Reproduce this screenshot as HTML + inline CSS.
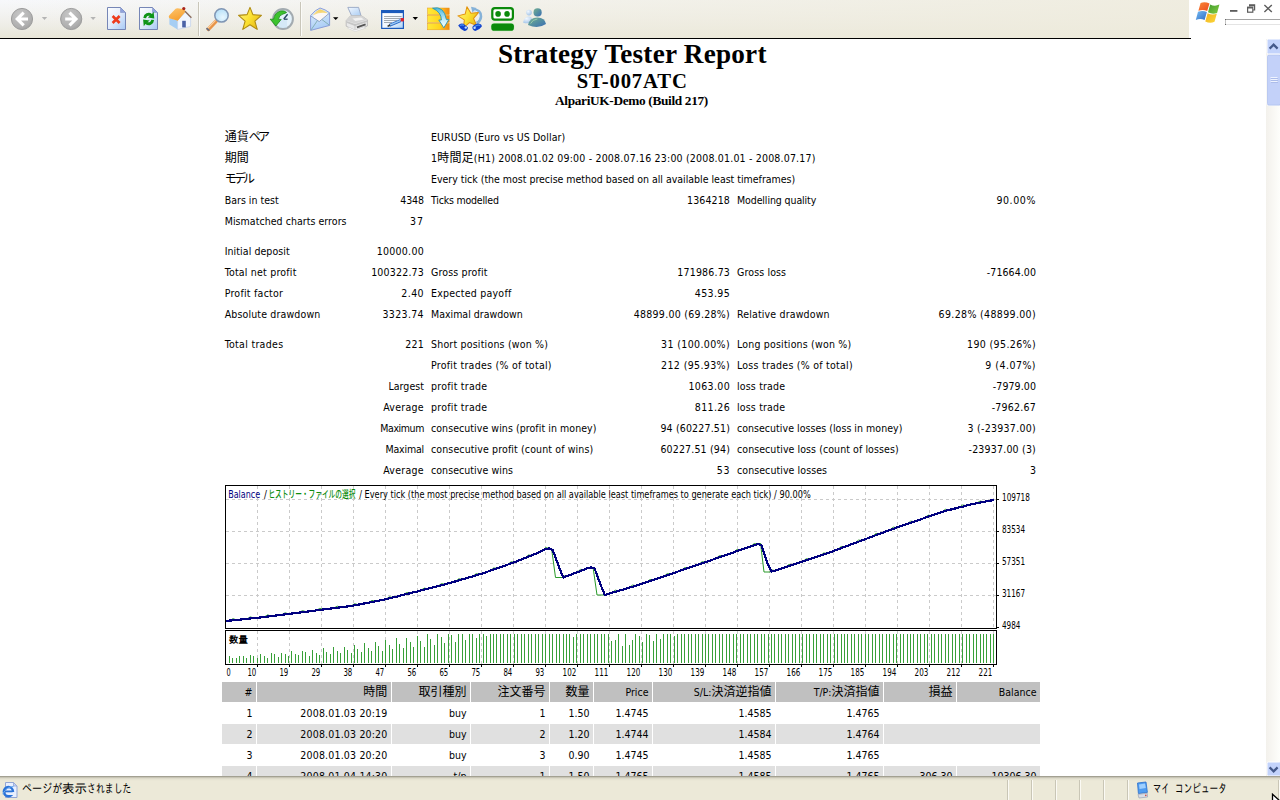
<!DOCTYPE html>
<html lang="ja">
<head>
<meta charset="utf-8">
<title>Strategy Tester: ST-007ATC</title>
<style>
html,body{margin:0;padding:0;}
body{width:1280px;height:800px;overflow:hidden;background:#fff;position:relative;
  font-family:"DejaVu Sans Condensed","Liberation Sans","Noto Sans CJK JP",sans-serif;font-size:10.5px;color:#000;}
.abs{position:absolute;}
#toolbar{position:absolute;left:0;top:0;width:1189px;height:38px;
  background:linear-gradient(to right,rgba(238,235,220,0) 0%,rgba(238,235,220,0.5) 45%,rgba(238,235,220,0.88) 100%),linear-gradient(to bottom,#f7f8fb 0px,#f3f3f1 14px,#eeede6 26px,#e8e5d7 38px);}
#tbline{position:absolute;left:0;top:38px;width:1191px;height:1px;background:#000;}
#page{position:absolute;left:0;top:39px;width:1266px;height:737px;overflow:hidden;background:#fff;}
h1,h2,h3{margin:0;font-family:"Liberation Serif",serif;font-weight:bold;position:absolute;left:0;width:1263px;text-align:center;white-space:nowrap;}
h1{font-size:27.2px;top:38px;left:0.8px;line-height:32px;letter-spacing:0.23px;}
h2{font-size:20.7px;top:69px;left:0.7px;line-height:24px;letter-spacing:0.85px;}
h3{font-size:13.3px;top:92.8px;line-height:16px;letter-spacing:-0.33px;}
.row{position:absolute;left:0;width:1266px;height:21px;line-height:21px;white-space:nowrap;}
.row span{position:absolute;top:0;}
.c1{left:224.7px;} .c2{right:842px;} .c3{left:431px;} .c4{right:536px;} .c5{left:737px;} .c6{right:230px;}
.jp{font-family:"Liberation Sans","Noto Sans CJK JP",sans-serif;font-size:12px;position:relative;top:0;}
.row span.jp{position:relative;top:0.4px;}
.row span.jp span{position:static;}
.kn{letter-spacing:-2.8px;}
#trades{position:absolute;left:222px;top:682px;width:819px;}
.tr{position:absolute;left:0;height:20px;width:819px;}
.tr div{position:absolute;top:0;height:20px;line-height:20px;text-align:right;box-sizing:border-box;padding-right:3.5px;padding-top:0;white-space:nowrap;overflow:hidden;}
.hd div{background:#c0c0c0;}
.alt div{background:#e0e0e0;}
.k1{left:0;width:34px}.k2{left:35px;width:134px;letter-spacing:0.18px}.k3{left:170px;width:78px}.k4{left:249px;width:78px}.k5{left:328px;width:43px}
.k6{left:372px;width:58px}.k7{left:431px;width:122px}.k8{left:554px;width:107px}.k9{left:662px;width:72px}.k10{left:735px;width:83px}
#status{position:absolute;left:0;top:776px;width:1280px;height:24px;background:#ece9d8;border-top:1px solid #aca899;box-sizing:border-box;}
#status .sp{position:absolute;top:3px;width:1px;height:20px;background:#c9c6b6;border-right:1px solid #fbfaf4;}
#status .st{position:absolute;top:5.4px;height:14px;line-height:14px;font-family:'Liberation Sans','IPAGothic','Noto Sans CJK JP',sans-serif;font-size:12.6px;white-space:nowrap;}
#status .sx{display:inline-block;transform-origin:0 50%;}
#vscroll{position:absolute;left:1266px;top:39px;width:14px;height:737px;background:linear-gradient(to right,#f3f1ec,#fefefb);}
</style>
</head>
<body>
<div id="toolbar">
<svg width="1189" height="38" viewBox="0 0 1189 38" style="position:absolute;left:0;top:0">
<defs>
<radialGradient id="gbtn" cx="0.4" cy="0.3" r="0.8"><stop offset="0" stop-color="#c6c6c6"/><stop offset="0.7" stop-color="#b0b0b0"/><stop offset="1" stop-color="#9c9c9c"/></radialGradient>
<linearGradient id="gpage" x1="0" y1="0" x2="1" y2="1"><stop offset="0" stop-color="#fdfeff"/><stop offset="0.45" stop-color="#e6eefb"/><stop offset="1" stop-color="#a6c9f5"/></linearGradient>
<linearGradient id="gstar" x1="0" y1="0.2" x2="1" y2="0.8"><stop offset="0" stop-color="#fff27a"/><stop offset="0.5" stop-color="#fbe030"/><stop offset="1" stop-color="#e4b414"/></linearGradient>
<radialGradient id="gglass" cx="0.6" cy="0.65" r="0.7"><stop offset="0" stop-color="#e8f7ff"/><stop offset="1" stop-color="#b2def8"/></radialGradient>
<linearGradient id="gyel" x1="0" y1="0" x2="1" y2="0"><stop offset="0" stop-color="#ffe93a"/><stop offset="0.55" stop-color="#ffd51e"/><stop offset="0.8" stop-color="#f9a21a"/><stop offset="1" stop-color="#f08a10"/></linearGradient>
<linearGradient id="gblu" x1="0" y1="0" x2="0" y2="1"><stop offset="0" stop-color="#48b8e0"/><stop offset="0.6" stop-color="#c4ecf8"/><stop offset="1" stop-color="#ffffff"/></linearGradient>
</defs>
<!-- back -->
<g>
<circle cx="22" cy="19" r="10.6" fill="url(#gbtn)" stroke="#9e9e9e" stroke-width="1"/>
<path d="M15 19 L22.6 11.6 L24.8 13.8 L21 17.5 L28 17.5 L28 20.6 L21 20.6 L24.8 24.3 L22.6 26.5 Z" fill="#fff"/>
<path d="M41.8 17 L47.2 17 L44.5 20 Z" fill="#b4b4b4"/>
</g>
<!-- forward -->
<g>
<circle cx="71.2" cy="19" r="10.6" fill="url(#gbtn)" stroke="#9e9e9e" stroke-width="1"/>
<path d="M78.2 19 L70.6 11.6 L68.4 13.8 L72.2 17.5 L65.2 17.5 L65.2 20.6 L72.2 20.6 L68.4 24.3 L70.6 26.5 Z" fill="#fff"/>
<path d="M90.4 17 L95.8 17 L93.1 20 Z" fill="#b4b4b4"/>
</g>
<!-- stop -->
<g>
<path d="M107.5 7.5 H120.5 L125.5 12.5 V29.5 H107.5 Z" fill="url(#gpage)" stroke="#7686b6" stroke-width="1"/>
<path d="M120.5 7.5 V12.5 H125.5 Z" fill="#8fa2dc" stroke="#8696c6" stroke-width="0.6" stroke-linejoin="round"/>
<path d="M112.6 16 L119.6 23 M119.6 16 L112.6 23" stroke="#ee3b1c" stroke-width="2.6" stroke-linecap="butt"/>
</g>
<!-- refresh -->
<g>
<path d="M139.5 7.5 H152.5 L157.5 12.5 V29.5 H139.5 Z" fill="url(#gpage)" stroke="#7686b6" stroke-width="1"/>
<path d="M152.5 7.5 V12.5 H157.5 Z" fill="#8fa2dc" stroke="#8696c6" stroke-width="0.6" stroke-linejoin="round"/>
<g transform="translate(148.7 19) scale(1.17) translate(-148.8 -19.5)"><path d="M144.2 18.6 A4.6 4.6 0 0 1 151.6 15.2 L153 13.2 L153.6 19 L148 18.2 L149.8 16.8 A2.4 2.4 0 0 0 146.6 18.8 Z" fill="#0f9418"/>
<path d="M153.4 20.4 A4.6 4.6 0 0 1 146 23.8 L144.6 25.8 L144 20 L149.6 20.8 L147.8 22.2 A2.4 2.4 0 0 0 151 20.2 Z" fill="#0f9418"/></g>
</g>
<!-- home -->
<g>
<defs><linearGradient id="groof" x1="0" y1="0" x2="0.4" y2="1"><stop offset="0" stop-color="#fdc56e"/><stop offset="1" stop-color="#f7a030"/></linearGradient></defs>
<path d="M169.4 18 L177.6 20.6 L177.6 29.4 L169.4 24.6 Z" fill="#a6cef4"/>
<path d="M177.6 20.4 L185.4 12.4 L190.6 17.8 L190.6 26.4 L177.6 29.4 Z" fill="#f1f6fd" stroke="#b9cbe8" stroke-width="0.6"/>
<path d="M168.8 17 Q168.6 16 169.6 15 L175.6 8.8 Q176.4 8.2 177.4 8.2 L184.6 9.2 L185.6 11.6 L177.8 20.8 L169.4 18.2 Z" fill="url(#groof)"/>
<path d="M185 11.2 L191.4 17.8" stroke="#8a6a5a" stroke-width="1.3" fill="none"/>
<rect x="182.2" y="20.8" width="3.6" height="6.6" fill="#4a62a6"/>
<circle cx="183.8" cy="8.6" r="1.6" fill="#a8241a"/>
</g>
<!-- sep -->
<rect x="198" y="2" width="1" height="34" fill="#c9c6ba"/><rect x="199" y="2" width="1" height="34" fill="#fbfbf8"/>
<!-- search -->
<g>
<defs><linearGradient id="ghandle" x1="0" y1="0" x2="1" y2="1"><stop offset="0" stop-color="#fbd3a2"/><stop offset="0.5" stop-color="#f0a050"/><stop offset="1" stop-color="#d87828"/></linearGradient></defs>
<path d="M216 21.2 L208.4 29.2" stroke="#e89448" stroke-width="3.8" stroke-linecap="round"/>
<path d="M215.2 20.6 L207.8 28.4" stroke="#fbd0a0" stroke-width="1.2" stroke-linecap="round"/>
<path d="M208.8 30.2 L207 28.6" stroke="#6a7080" stroke-width="1.8" stroke-linecap="round"/>
<circle cx="221.5" cy="15.4" r="6.7" fill="url(#gglass)" stroke="#8096b4" stroke-width="1.5"/>
</g>
<!-- star -->
<path d="M250 7.4 L252.9 14.6 L261.4 15.4 L254.9 21.2 L257.2 29.4 L250 24.8 L242.8 29.4 L245.1 21.2 L238.6 15.4 L247.1 14.6 Z" fill="url(#gstar)" stroke="#b08c12" stroke-width="1.1" stroke-linejoin="round"/>
<!-- history -->
<g>
<circle cx="283" cy="19" r="9.9" fill="#e4f2fb" stroke="#a3abb0" stroke-width="2"/>
<path d="M283 20 L283 28" stroke="#c7e2f5" stroke-width="8" opacity="0.5"/>
<path d="M283.8 19 L287.6 14.2" stroke="#2c4a66" stroke-width="1.4"/>
<path d="M283.8 19.2 L287.6 19.2" stroke="#2c4a66" stroke-width="1.3"/>
<path d="M286.6 12.4 Q284.4 10.2 280.6 11 Q274.4 12.8 273.6 19.2 L270.2 19.2 L275.9 26 L281.2 19.4 L278.4 19.4 Q279 15 283 14 Q285 13.6 286.6 12.4 Z" fill="#3cc22e" stroke="#1d8a1c" stroke-width="0.8" stroke-linejoin="round"/>
</g>
<!-- sep -->
<rect x="300" y="2" width="1" height="34" fill="#c9c6ba"/><rect x="301" y="2" width="1" height="34" fill="#fbfbf8"/>
<!-- mail -->
<g>
<defs><linearGradient id="gmail" x1="0" y1="0" x2="0.3" y2="1"><stop offset="0" stop-color="#e6f2fd"/><stop offset="1" stop-color="#a9cdf6"/></linearGradient>
<linearGradient id="gflap" x1="0" y1="0" x2="0" y2="1"><stop offset="0" stop-color="#f3cf5e"/><stop offset="1" stop-color="#fbe7b0"/></linearGradient></defs>
<path d="M310.6 15.6 Q315 10 320 8 Q325.4 9.4 329.6 12.8 L329.6 25.4 L310.6 30.4 Z" fill="url(#gmail)" stroke="#8c9ed8" stroke-width="1" stroke-linejoin="round"/>
<path d="M313 14.8 Q316 10.6 320 9.2 Q324.4 10.2 327.4 12.8 L320.4 17.4 Z" fill="url(#gflap)"/>
<path d="M313.4 15.2 Q320 11.6 327.4 13.2 L327.6 15.4 L319.4 21.2 L313.4 17.4 Z" fill="#fcf7f4"/>
<path d="M310.8 16 L319.2 21.6 L329.4 13.2" stroke="#8fa4c8" stroke-width="1" fill="none"/>
<path d="M311 30 L317.4 20.6 M329.4 25.2 L322 19.6" stroke="#86b0b6" stroke-width="1" fill="none"/>
<path d="M333 17.2 L338.4 17.2 L335.7 20 Z" fill="#000"/>
</g>
<!-- printer -->
<g>
<defs><linearGradient id="gpap" x1="0" y1="0" x2="1" y2="1"><stop offset="0" stop-color="#f4f9ff"/><stop offset="1" stop-color="#a8cbf3"/></linearGradient></defs>
<path d="M347.8 7.4 L358.6 7.4 L361 15.8 L351.6 15.8 Z" fill="url(#gpap)" stroke="#96a6c4" stroke-width="0.9" stroke-linejoin="round"/>
<path d="M346.2 20.6 L350.6 15.8 L361.6 15.8 L367.4 19.8 L367.4 26 L354.8 30.4 L346.2 26.2 Z" fill="#e9e9e9" stroke="#b4b4b4" stroke-width="0.8" stroke-linejoin="round"/>
<path d="M346.2 20.6 L350.6 15.8 L361.6 15.8 L367.4 19.8 L355 23.6 Z" fill="#d4d4d4"/>
<path d="M352.4 18.4 L361 17.6 L364 19.6 L355.4 21 Z" fill="#f2f2f2"/>
<path d="M346.4 21 L355 24 L367.2 20.2 L367.2 22 L355 26 L346.4 22.8 Z" fill="#c6c6c6"/>
<path d="M355 24 L355 30" stroke="#c0c0c0" stroke-width="0.7"/>
<path d="M357 27.4 L365.6 24.4" stroke="#555" stroke-width="1.8"/>
<path d="M349 27.2 L355 30 L363.6 27 L366 28 L355.2 31.6 L347.6 28.2 Z" fill="#f7f7f7" stroke="#cfcfcf" stroke-width="0.5"/>
</g>
<!-- edit -->
<g>
<defs><linearGradient id="gwin" x1="0" y1="0" x2="1" y2="1"><stop offset="0" stop-color="#ffffff"/><stop offset="0.55" stop-color="#f2f8ff"/><stop offset="1" stop-color="#a9cff6"/></linearGradient></defs>
<rect x="381.7" y="10.7" width="21.7" height="17.7" fill="url(#gwin)" stroke="#1a5abc" stroke-width="1.2"/>
<rect x="381.1" y="10.1" width="22.9" height="3" fill="#1a5abc"/>
<path d="M384 16.5 H401.6 M384 18.5 H401.6 M384 20.5 H397 M384 22.5 H392" stroke="#98a0a8" stroke-width="0.9"/>
<path d="M389.4 25.4 L400.6 20.6" stroke="#2a68c8" stroke-width="3"/>
<path d="M389.8 25.2 L400.4 20.7" stroke="#9ccaf4" stroke-width="1.4"/>
<path d="M387.6 26.4 L390.2 25" stroke="#3a3a30" stroke-width="1.6"/>
<rect x="400.6" y="18" width="3.4" height="3.4" rx="0.8" fill="#d8222e"/>
<path d="M412.6 17 L418 17 L415.3 20 Z" fill="#000"/>
</g>
<!-- icon A: feeds -->
<g>
<rect x="427.6" y="8" width="21.6" height="6.6" fill="url(#gyel)" stroke="#e89a18" stroke-width="0.5"/>
<rect x="427.6" y="15.4" width="21.6" height="7" fill="url(#gyel)" stroke="#e89a18" stroke-width="0.5"/>
<rect x="427.6" y="23.4" width="21.6" height="6.4" fill="url(#gyel)" stroke="#e89a18" stroke-width="0.5"/>
<path d="M432.6 8.2 Q444 5.4 446.4 19.6 L448.8 19.6 L443.8 27.8 L438.8 20 L441.4 20 Q441.4 12 432.6 8.2 Z" fill="url(#gblu)" stroke="#2896b4" stroke-width="0.9" stroke-linejoin="round"/>
</g>
<!-- icon B: star with feet -->
<g>
<path d="M472.6 9.4 Q481 9.6 480.8 16.6 Q480.4 21 476.6 23" fill="none" stroke="#86b2d8" stroke-width="3"/>
<path d="M473.4 10.6 Q479.4 11 479.2 16.6 Q479 19.6 476.4 21.4" fill="none" stroke="#e6f2fa" stroke-width="1"/>
<path d="M471 6.8 L476.6 8 L472.4 12.6 Z" fill="#86b2d8"/>
<g transform="rotate(-9 468.6 17)">
<path d="M468.6 6.6 L471.5 13.6 L479 14.2 L473.3 19.2 L475.2 26.6 L468.6 22.6 L462 26.6 L463.9 19.2 L458.2 14.2 L465.7 13.6 Z" fill="url(#gstar)" stroke="#e2920e" stroke-width="1" stroke-linejoin="round"/>
</g>
<path d="M458.2 25.4 Q460.4 22.6 463.6 23.8 L468 27.4 Q467.6 30.8 464.4 31 Q460.6 29.6 458.2 25.4 Z" fill="#1444cc"/>
<path d="M472.4 27 Q474.4 23.6 478.6 23.4 Q482 24 481.8 26.6 Q479.6 30 475.4 31 Q472.2 30.2 472.4 27 Z" fill="#1444cc"/>
<path d="M460 25.6 Q462 24.4 464 25.4" stroke="#4a90f0" stroke-width="1.2" fill="none"/>
<path d="M475 26.4 Q477.6 24.6 480.2 25.4" stroke="#4a90f0" stroke-width="1.2" fill="none"/>
<circle cx="465.8" cy="27.6" r="1.2" fill="#bfe0ff"/><circle cx="474.6" cy="27.8" r="1.2" fill="#bfe0ff"/>
</g>
<!-- icon C: roboform -->
<g>
<rect x="491.2" y="7" width="22.8" height="13.8" rx="3.4" fill="#c9efc2"/>
<rect x="490.8" y="23" width="23.6" height="8.2" rx="3.4" fill="#c9efc2"/>
<rect x="492.3" y="8.1" width="20.6" height="11.6" rx="2.6" fill="#fff" stroke="#0b8a0b" stroke-width="2.2"/>
<circle cx="498.1" cy="13.9" r="2.8" fill="#0b8a0b"/><circle cx="507.1" cy="13.9" r="2.8" fill="#0b8a0b"/>
<rect x="491.3" y="23.5" width="22.6" height="7.2" rx="2.8" fill="#0b8a0b"/>
</g>
<!-- icon D: messenger -->
<g>
<defs><linearGradient id="gmsn" x1="0" y1="0" x2="1" y2="1"><stop offset="0" stop-color="#76b092"/><stop offset="0.5" stop-color="#5490a0"/><stop offset="1" stop-color="#3a6cb4"/></linearGradient>
<radialGradient id="gmsn2" cx="0.35" cy="0.3" r="0.8"><stop offset="0" stop-color="#f2f8ff"/><stop offset="1" stop-color="#9cc0e6"/></radialGradient></defs>
<circle cx="529" cy="12.6" r="2.8" fill="url(#gmsn2)"/>
<path d="M523 22.4 Q524.4 16.4 529.2 16.6 Q532.6 17 533.2 21.6 Q528 24.6 523 22.4 Z" fill="url(#gmsn2)"/>
<circle cx="537.6" cy="12.4" r="4.1" fill="url(#gmsn)"/>
<path d="M528 25 Q529.4 17.6 537.4 17.4 Q545 17.6 546 24 Q538 29.4 528 25 Z" fill="url(#gmsn)"/>
<path d="M530.6 23.6 Q532.6 19.4 537.4 19" stroke="#a4d4b0" stroke-width="1" fill="none" opacity="0.8"/>
</g>
</svg>

</div>
<div id="tbline"></div>
<svg width="91" height="38" viewBox="1189 0 91 38" style="position:absolute;left:1189px;top:0">
<defs>
<linearGradient id="fr" x1="0" y1="0" x2="1" y2="1"><stop offset="0" stop-color="#f88838"/><stop offset="1" stop-color="#ee4c20"/></linearGradient>
<linearGradient id="fg" x1="0" y1="0" x2="1" y2="1"><stop offset="0" stop-color="#3f9c2e"/><stop offset="1" stop-color="#86cc40"/></linearGradient>
<linearGradient id="fb" x1="0" y1="0" x2="1" y2="1"><stop offset="0" stop-color="#76bcf4"/><stop offset="1" stop-color="#2f6cc4"/></linearGradient>
<linearGradient id="fy" x1="0" y1="0" x2="1" y2="1"><stop offset="0" stop-color="#f0b020"/><stop offset="1" stop-color="#fcd838"/></linearGradient>
</defs>
<path d="M1200.6 2.9 Q1205 1.5 1209.5 3.4 L1207.2 10.9 Q1203 9.2 1198.4 10.7 Z" fill="url(#fr)"/>
<path d="M1210.2 4.4 Q1214.6 6.8 1219.4 4.6 L1217.1 12.9 Q1212.6 14.8 1208 12.3 Z" fill="url(#fg)"/>
<path d="M1198 11.7 Q1202.6 10.2 1206.9 11.9 L1204.6 20 Q1200.4 18.3 1195.8 19.9 Z" fill="url(#fb)"/>
<path d="M1207.6 13.2 Q1212 15.7 1216.8 13.8 L1214.5 21.8 Q1210 24 1205.3 21.4 Z" fill="url(#fy)"/>
<rect x="1230" y="10" width="7.4" height="1.8" fill="#5c5c5c"/>
<g fill="none" stroke="#5c5c5c" stroke-width="1.2">
<path d="M1249.6 6.6 V4.8 H1254.6 V10 H1253"/>
<path d="M1249.6 5.6 H1254.6" stroke-width="1.4"/>
<rect x="1247.6" y="7.2" width="5.2" height="5"/>
<path d="M1247.6 7.8 H1252.8" stroke-width="1.4"/>
<path d="M1264.4 5 L1271.8 12 M1271.8 5 L1264.4 12" stroke-width="1.4"/>
</g>
<rect x="1225" y="19" width="55" height="1" fill="#a4a4a4"/>
<rect x="1225" y="19" width="1" height="6" fill="#c4c4c4"/><rect x="1225" y="19" width="1" height="1" fill="#6a6a6a"/><rect x="1225" y="24" width="1" height="1" fill="#6a6a6a"/>
<rect x="1226" y="24" width="54" height="1" fill="#e4e4e4"/>
</svg>

<div id="page">
</div>
<h1>Strategy Tester Report</h1>
<h2>ST-007ATC</h2>
<h3>AlpariUK-Demo (Build 217)</h3>

<div class="row" style="top:127px"><span class="c1" id="s127_c1"><span class="jp">通貨<span class="kn">ペア</span></span></span><span class="c3" id="s127_c3" style="letter-spacing:0.096px">EURUSD (Euro vs US Dollar)</span></div>
<div class="row" style="top:148px"><span class="c1" id="s148_c1"><span class="jp">期間</span></span><span class="c3" id="s148_c3" style="letter-spacing:0.188px">1<span class="jp">時間足</span>(H1) 2008.01.02 09:00 - 2008.07.16 23:00 (2008.01.01 - 2008.07.17)</span></div>
<div class="row" style="top:169px"><span class="c1" id="s169_c1"><span class="jp kn">モデル</span></span><span class="c3" id="s169_c3" style="letter-spacing:-0.010px">Every tick (the most precise method based on all available least timeframes)</span></div>
<div class="row" style="top:190px"><span class="c1" id="s190_c1" style="letter-spacing:0.018px">Bars in test</span><span class="c2" id="s190_c2" style="letter-spacing:-0.066px">4348</span><span class="c3" id="s190_c3" style="letter-spacing:-0.200px">Ticks modelled</span><span class="c4" id="s190_c4" style="letter-spacing:0.134px">1364218</span><span class="c5" id="s190_c5" style="letter-spacing:-0.101px">Modelling quality</span><span class="c6" id="s190_c6" style="letter-spacing:0.600px">90.00%</span></div>
<div class="row" style="top:211px"><span class="c1" id="s211_c1" style="letter-spacing:0.053px">Mismatched charts errors</span><span class="c2" id="s211_c2" style="letter-spacing:1.000px">37</span></div>
<div class="row" style="top:241px"><span class="c1" id="s241_c1" style="letter-spacing:0.072px">Initial deposit</span><span class="c2" id="s241_c2" style="letter-spacing:0.286px">10000.00</span></div>
<div class="row" style="top:262px"><span class="c1" id="s262_c1" style="letter-spacing:0.213px">Total net profit</span><span class="c2" id="s262_c2" style="letter-spacing:0.200px">100322.73</span><span class="c3" id="s262_c3" style="letter-spacing:0.163px">Gross profit</span><span class="c4" id="s262_c4" style="letter-spacing:0.174px">171986.73</span><span class="c5" id="s262_c5" style="letter-spacing:0.134px">Gross loss</span><span class="c6" id="s262_c6" style="letter-spacing:0.075px">-71664.00</span></div>
<div class="row" style="top:283px"><span class="c1" id="s283_c1" style="letter-spacing:0.250px">Profit factor</span><span class="c2" id="s283_c2" style="letter-spacing:0.400px">2.40</span><span class="c3" id="s283_c3" style="letter-spacing:0.243px">Expected payoff</span><span class="c4" id="s283_c4" style="letter-spacing:0.360px">453.95</span></div>
<div class="row" style="top:304px"><span class="c1" id="s304_c1" style="letter-spacing:0.150px">Absolute drawdown</span><span class="c2" id="s304_c2" style="letter-spacing:0.367px">3323.74</span><span class="c3" id="s304_c3" style="letter-spacing:-0.000px">Maximal drawdown</span><span class="c4" id="s304_c4" style="letter-spacing:0.287px">48899.00 (69.28%)</span><span class="c5" id="s304_c5" style="letter-spacing:0.162px">Relative drawdown</span><span class="c6" id="s304_c6" style="letter-spacing:0.350px">69.28% (48899.00)</span></div>
<div class="row" style="top:334px"><span class="c1" id="s334_c1" style="letter-spacing:0.309px">Total trades</span><span class="c2" id="s334_c2" style="letter-spacing:0.200px">221</span><span class="c3" id="s334_c3" style="letter-spacing:0.200px">Short positions (won %)</span><span class="c4" id="s334_c4" style="letter-spacing:0.373px">31 (100.00%)</span><span class="c5" id="s334_c5" style="letter-spacing:0.196px">Long positions (won %)</span><span class="c6" id="s334_c6" style="letter-spacing:0.382px">190 (95.26%)</span></div>
<div class="row" style="top:355px"><span class="c3" id="s355_c3" style="letter-spacing:0.272px">Profit trades (% of total)</span><span class="c4" id="s355_c4" style="letter-spacing:0.373px">212 (95.93%)</span><span class="c5" id="s355_c5" style="letter-spacing:0.252px">Loss trades (% of total)</span><span class="c6" id="s355_c6" style="letter-spacing:0.476px">9 (4.07%)</span></div>
<div class="row" style="top:376px"><span class="c2" id="s376_c2" style="letter-spacing:0.050px">Largest</span><span class="c3" id="s376_c3" style="letter-spacing:0.254px">profit trade</span><span class="c4" id="s376_c4" style="letter-spacing:0.350px">1063.00</span><span class="c5" id="s376_c5" style="letter-spacing:0.177px">loss trade</span><span class="c6" id="s376_c6" style="letter-spacing:0.085px">-7979.00</span></div>
<div class="row" style="top:397px"><span class="c2" id="s397_c2" style="letter-spacing:0.300px">Average</span><span class="c3" id="s397_c3" style="letter-spacing:0.254px">profit trade</span><span class="c4" id="s397_c4" style="letter-spacing:0.360px">811.26</span><span class="c5" id="s397_c5" style="letter-spacing:0.177px">loss trade</span><span class="c6" id="s397_c6" style="letter-spacing:0.228px">-7962.67</span></div>
<div class="row" style="top:418px"><span class="c2" id="s418_c2" style="letter-spacing:-0.400px">Maximum</span><span class="c3" id="s418_c3" style="letter-spacing:0.064px">consecutive wins (profit in money)</span><span class="c4" id="s418_c4" style="letter-spacing:0.166px">94 (60227.51)</span><span class="c5" id="s418_c5" style="letter-spacing:0.034px">consecutive losses (loss in money)</span><span class="c6" id="s418_c6" style="letter-spacing:0.284px">3 (-23937.00)</span></div>
<div class="row" style="top:439px"><span class="c2" id="s439_c2" style="letter-spacing:-0.167px">Maximal</span><span class="c3" id="s439_c3" style="letter-spacing:0.125px">consecutive profit (count of wins)</span><span class="c4" id="s439_c4" style="letter-spacing:0.166px">60227.51 (94)</span><span class="c5" id="s439_c5" style="letter-spacing:0.079px">consecutive loss (count of losses)</span><span class="c6" id="s439_c6" style="letter-spacing:0.200px">-23937.00 (3)</span></div>
<div class="row" style="top:460px"><span class="c2" id="s460_c2" style="letter-spacing:0.300px">Average</span><span class="c3" id="s460_c3" style="letter-spacing:0.066px">consecutive wins</span><span class="c4" id="s460_c4" style="letter-spacing:0.600px">53</span><span class="c5" id="s460_c5" style="letter-spacing:0.083px">consecutive losses</span><span class="c6" id="s460_c6">3</span></div>

<svg id="chart" width="820" height="200" viewBox="222 482 820 200" style="position:absolute;left:222px;top:482px" shape-rendering="crispEdges">
<g stroke="#cacaca" stroke-width="1" stroke-dasharray="3,3">
<line x1="257.5" y1="486" x2="257.5" y2="628"/>
<line x1="257.5" y1="631" x2="257.5" y2="664"/>
<line x1="289.5" y1="486" x2="289.5" y2="628"/>
<line x1="289.5" y1="631" x2="289.5" y2="664"/>
<line x1="321.5" y1="486" x2="321.5" y2="628"/>
<line x1="321.5" y1="631" x2="321.5" y2="664"/>
<line x1="353.5" y1="486" x2="353.5" y2="628"/>
<line x1="353.5" y1="631" x2="353.5" y2="664"/>
<line x1="385.5" y1="486" x2="385.5" y2="628"/>
<line x1="385.5" y1="631" x2="385.5" y2="664"/>
<line x1="417.5" y1="486" x2="417.5" y2="628"/>
<line x1="417.5" y1="631" x2="417.5" y2="664"/>
<line x1="449.5" y1="486" x2="449.5" y2="628"/>
<line x1="449.5" y1="631" x2="449.5" y2="664"/>
<line x1="481.5" y1="486" x2="481.5" y2="628"/>
<line x1="481.5" y1="631" x2="481.5" y2="664"/>
<line x1="513.5" y1="486" x2="513.5" y2="628"/>
<line x1="513.5" y1="631" x2="513.5" y2="664"/>
<line x1="545.5" y1="486" x2="545.5" y2="628"/>
<line x1="545.5" y1="631" x2="545.5" y2="664"/>
<line x1="577.5" y1="486" x2="577.5" y2="628"/>
<line x1="577.5" y1="631" x2="577.5" y2="664"/>
<line x1="609.5" y1="486" x2="609.5" y2="628"/>
<line x1="609.5" y1="631" x2="609.5" y2="664"/>
<line x1="641.5" y1="486" x2="641.5" y2="628"/>
<line x1="641.5" y1="631" x2="641.5" y2="664"/>
<line x1="673.5" y1="486" x2="673.5" y2="628"/>
<line x1="673.5" y1="631" x2="673.5" y2="664"/>
<line x1="705.5" y1="486" x2="705.5" y2="628"/>
<line x1="705.5" y1="631" x2="705.5" y2="664"/>
<line x1="737.5" y1="486" x2="737.5" y2="628"/>
<line x1="737.5" y1="631" x2="737.5" y2="664"/>
<line x1="769.5" y1="486" x2="769.5" y2="628"/>
<line x1="769.5" y1="631" x2="769.5" y2="664"/>
<line x1="801.5" y1="486" x2="801.5" y2="628"/>
<line x1="801.5" y1="631" x2="801.5" y2="664"/>
<line x1="833.5" y1="486" x2="833.5" y2="628"/>
<line x1="833.5" y1="631" x2="833.5" y2="664"/>
<line x1="865.5" y1="486" x2="865.5" y2="628"/>
<line x1="865.5" y1="631" x2="865.5" y2="664"/>
<line x1="897.5" y1="486" x2="897.5" y2="628"/>
<line x1="897.5" y1="631" x2="897.5" y2="664"/>
<line x1="929.5" y1="486" x2="929.5" y2="628"/>
<line x1="929.5" y1="631" x2="929.5" y2="664"/>
<line x1="961.5" y1="486" x2="961.5" y2="628"/>
<line x1="961.5" y1="631" x2="961.5" y2="664"/>
<line x1="993.5" y1="486" x2="993.5" y2="628"/>
<line x1="993.5" y1="631" x2="993.5" y2="664"/>
<line x1="226" y1="499.5" x2="996" y2="499.5"/>
<line x1="226" y1="531.5" x2="996" y2="531.5"/>
<line x1="226" y1="563.5" x2="996" y2="563.5"/>
<line x1="226" y1="595.5" x2="996" y2="595.5"/>
</g>
<g stroke="#38a038" stroke-width="1">
<line x1="229.5" y1="656" x2="229.5" y2="663"/>
<line x1="232.5" y1="658" x2="232.5" y2="663"/>
<line x1="236.5" y1="658" x2="236.5" y2="663"/>
<line x1="239.5" y1="656" x2="239.5" y2="663"/>
<line x1="243.5" y1="656" x2="243.5" y2="663"/>
<line x1="246.5" y1="658" x2="246.5" y2="663"/>
<line x1="250.5" y1="655" x2="250.5" y2="663"/>
<line x1="253.5" y1="656" x2="253.5" y2="663"/>
<line x1="257.5" y1="658" x2="257.5" y2="663"/>
<line x1="260.5" y1="654" x2="260.5" y2="663"/>
<line x1="264.5" y1="656" x2="264.5" y2="663"/>
<line x1="267.5" y1="658" x2="267.5" y2="663"/>
<line x1="271.5" y1="653" x2="271.5" y2="663"/>
<line x1="274.5" y1="654" x2="274.5" y2="663"/>
<line x1="278.5" y1="657" x2="278.5" y2="663"/>
<line x1="281.5" y1="653" x2="281.5" y2="663"/>
<line x1="285.5" y1="654" x2="285.5" y2="663"/>
<line x1="288.5" y1="656" x2="288.5" y2="663"/>
<line x1="291.5" y1="651" x2="291.5" y2="663"/>
<line x1="295.5" y1="654" x2="295.5" y2="663"/>
<line x1="298.5" y1="655" x2="298.5" y2="663"/>
<line x1="302.5" y1="651" x2="302.5" y2="663"/>
<line x1="305.5" y1="652" x2="305.5" y2="663"/>
<line x1="309.5" y1="656" x2="309.5" y2="663"/>
<line x1="312.5" y1="650" x2="312.5" y2="663"/>
<line x1="316.5" y1="653" x2="316.5" y2="663"/>
<line x1="319.5" y1="655" x2="319.5" y2="663"/>
<line x1="323.5" y1="648" x2="323.5" y2="663"/>
<line x1="326.5" y1="652" x2="326.5" y2="663"/>
<line x1="330.5" y1="654" x2="330.5" y2="663"/>
<line x1="333.5" y1="647" x2="333.5" y2="663"/>
<line x1="337.5" y1="651" x2="337.5" y2="663"/>
<line x1="340.5" y1="653" x2="340.5" y2="663"/>
<line x1="344.5" y1="647" x2="344.5" y2="663"/>
<line x1="347.5" y1="650" x2="347.5" y2="663"/>
<line x1="351.5" y1="653" x2="351.5" y2="663"/>
<line x1="354.5" y1="645" x2="354.5" y2="663"/>
<line x1="357.5" y1="649" x2="357.5" y2="663"/>
<line x1="361.5" y1="652" x2="361.5" y2="663"/>
<line x1="364.5" y1="643" x2="364.5" y2="663"/>
<line x1="368.5" y1="648" x2="368.5" y2="663"/>
<line x1="371.5" y1="651" x2="371.5" y2="663"/>
<line x1="375.5" y1="642" x2="375.5" y2="663"/>
<line x1="378.5" y1="646" x2="378.5" y2="663"/>
<line x1="382.5" y1="651" x2="382.5" y2="663"/>
<line x1="385.5" y1="640" x2="385.5" y2="663"/>
<line x1="389.5" y1="645" x2="389.5" y2="663"/>
<line x1="392.5" y1="649" x2="392.5" y2="663"/>
<line x1="396.5" y1="638" x2="396.5" y2="663"/>
<line x1="399.5" y1="644" x2="399.5" y2="663"/>
<line x1="403.5" y1="648" x2="403.5" y2="663"/>
<line x1="406.5" y1="638" x2="406.5" y2="663"/>
<line x1="410.5" y1="642" x2="410.5" y2="663"/>
<line x1="413.5" y1="647" x2="413.5" y2="663"/>
<line x1="417.5" y1="636" x2="417.5" y2="663"/>
<line x1="420.5" y1="641" x2="420.5" y2="663"/>
<line x1="424.5" y1="647" x2="424.5" y2="663"/>
<line x1="427.5" y1="634" x2="427.5" y2="663"/>
<line x1="430.5" y1="639" x2="430.5" y2="663"/>
<line x1="434.5" y1="645" x2="434.5" y2="663"/>
<line x1="437.5" y1="634" x2="437.5" y2="663"/>
<line x1="441.5" y1="637" x2="441.5" y2="663"/>
<line x1="444.5" y1="643" x2="444.5" y2="663"/>
<line x1="448.5" y1="634" x2="448.5" y2="663"/>
<line x1="451.5" y1="635" x2="451.5" y2="663"/>
<line x1="455.5" y1="642" x2="455.5" y2="663"/>
<line x1="458.5" y1="634" x2="458.5" y2="663"/>
<line x1="462.5" y1="634" x2="462.5" y2="663"/>
<line x1="465.5" y1="640" x2="465.5" y2="663"/>
<line x1="469.5" y1="634" x2="469.5" y2="663"/>
<line x1="472.5" y1="634" x2="472.5" y2="663"/>
<line x1="476.5" y1="638" x2="476.5" y2="663"/>
<line x1="479.5" y1="634" x2="479.5" y2="663"/>
<line x1="483.5" y1="634" x2="483.5" y2="663"/>
<line x1="486.5" y1="636" x2="486.5" y2="663"/>
<line x1="490.5" y1="634" x2="490.5" y2="663"/>
<line x1="493.5" y1="634" x2="493.5" y2="663"/>
<line x1="496.5" y1="634" x2="496.5" y2="663"/>
<line x1="500.5" y1="634" x2="500.5" y2="663"/>
<line x1="503.5" y1="634" x2="503.5" y2="663"/>
<line x1="507.5" y1="634" x2="507.5" y2="663"/>
<line x1="510.5" y1="634" x2="510.5" y2="663"/>
<line x1="514.5" y1="634" x2="514.5" y2="663"/>
<line x1="517.5" y1="634" x2="517.5" y2="663"/>
<line x1="521.5" y1="634" x2="521.5" y2="663"/>
<line x1="524.5" y1="634" x2="524.5" y2="663"/>
<line x1="528.5" y1="634" x2="528.5" y2="663"/>
<line x1="531.5" y1="634" x2="531.5" y2="663"/>
<line x1="535.5" y1="634" x2="535.5" y2="663"/>
<line x1="538.5" y1="634" x2="538.5" y2="663"/>
<line x1="542.5" y1="634" x2="542.5" y2="663"/>
<line x1="545.5" y1="634" x2="545.5" y2="663"/>
<line x1="549.5" y1="634" x2="549.5" y2="663"/>
<line x1="552.5" y1="634" x2="552.5" y2="663"/>
<line x1="556.5" y1="634" x2="556.5" y2="663"/>
<line x1="559.5" y1="634" x2="559.5" y2="663"/>
<line x1="563.5" y1="634" x2="563.5" y2="663"/>
<line x1="566.5" y1="634" x2="566.5" y2="663"/>
<line x1="569.5" y1="634" x2="569.5" y2="663"/>
<line x1="573.5" y1="637" x2="573.5" y2="663"/>
<line x1="576.5" y1="634" x2="576.5" y2="663"/>
<line x1="580.5" y1="634" x2="580.5" y2="663"/>
<line x1="583.5" y1="634" x2="583.5" y2="663"/>
<line x1="587.5" y1="634" x2="587.5" y2="663"/>
<line x1="590.5" y1="634" x2="590.5" y2="663"/>
<line x1="594.5" y1="634" x2="594.5" y2="663"/>
<line x1="597.5" y1="634" x2="597.5" y2="663"/>
<line x1="601.5" y1="634" x2="601.5" y2="663"/>
<line x1="604.5" y1="634" x2="604.5" y2="663"/>
<line x1="608.5" y1="634" x2="608.5" y2="663"/>
<line x1="611.5" y1="641" x2="611.5" y2="663"/>
<line x1="615.5" y1="640" x2="615.5" y2="663"/>
<line x1="618.5" y1="634" x2="618.5" y2="663"/>
<line x1="622.5" y1="646" x2="622.5" y2="663"/>
<line x1="625.5" y1="634" x2="625.5" y2="663"/>
<line x1="629.5" y1="645" x2="629.5" y2="663"/>
<line x1="632.5" y1="640" x2="632.5" y2="663"/>
<line x1="635.5" y1="634" x2="635.5" y2="663"/>
<line x1="639.5" y1="636" x2="639.5" y2="663"/>
<line x1="642.5" y1="642" x2="642.5" y2="663"/>
<line x1="646.5" y1="634" x2="646.5" y2="663"/>
<line x1="649.5" y1="635" x2="649.5" y2="663"/>
<line x1="653.5" y1="641" x2="653.5" y2="663"/>
<line x1="656.5" y1="634" x2="656.5" y2="663"/>
<line x1="660.5" y1="639" x2="660.5" y2="663"/>
<line x1="663.5" y1="634" x2="663.5" y2="663"/>
<line x1="667.5" y1="634" x2="667.5" y2="663"/>
<line x1="670.5" y1="634" x2="670.5" y2="663"/>
<line x1="674.5" y1="636" x2="674.5" y2="663"/>
<line x1="677.5" y1="634" x2="677.5" y2="663"/>
<line x1="681.5" y1="634" x2="681.5" y2="663"/>
<line x1="684.5" y1="634" x2="684.5" y2="663"/>
<line x1="688.5" y1="634" x2="688.5" y2="663"/>
<line x1="691.5" y1="634" x2="691.5" y2="663"/>
<line x1="695.5" y1="634" x2="695.5" y2="663"/>
<line x1="698.5" y1="634" x2="698.5" y2="663"/>
<line x1="702.5" y1="634" x2="702.5" y2="663"/>
<line x1="705.5" y1="634" x2="705.5" y2="663"/>
<line x1="708.5" y1="634" x2="708.5" y2="663"/>
<line x1="712.5" y1="634" x2="712.5" y2="663"/>
<line x1="715.5" y1="634" x2="715.5" y2="663"/>
<line x1="719.5" y1="634" x2="719.5" y2="663"/>
<line x1="722.5" y1="634" x2="722.5" y2="663"/>
<line x1="726.5" y1="634" x2="726.5" y2="663"/>
<line x1="729.5" y1="634" x2="729.5" y2="663"/>
<line x1="733.5" y1="634" x2="733.5" y2="663"/>
<line x1="736.5" y1="634" x2="736.5" y2="663"/>
<line x1="740.5" y1="634" x2="740.5" y2="663"/>
<line x1="743.5" y1="634" x2="743.5" y2="663"/>
<line x1="747.5" y1="634" x2="747.5" y2="663"/>
<line x1="750.5" y1="634" x2="750.5" y2="663"/>
<line x1="754.5" y1="634" x2="754.5" y2="663"/>
<line x1="757.5" y1="634" x2="757.5" y2="663"/>
<line x1="761.5" y1="634" x2="761.5" y2="663"/>
<line x1="764.5" y1="634" x2="764.5" y2="663"/>
<line x1="768.5" y1="634" x2="768.5" y2="663"/>
<line x1="771.5" y1="634" x2="771.5" y2="663"/>
<line x1="774.5" y1="634" x2="774.5" y2="663"/>
<line x1="778.5" y1="634" x2="778.5" y2="663"/>
<line x1="781.5" y1="634" x2="781.5" y2="663"/>
<line x1="785.5" y1="634" x2="785.5" y2="663"/>
<line x1="788.5" y1="634" x2="788.5" y2="663"/>
<line x1="792.5" y1="634" x2="792.5" y2="663"/>
<line x1="795.5" y1="634" x2="795.5" y2="663"/>
<line x1="799.5" y1="634" x2="799.5" y2="663"/>
<line x1="802.5" y1="634" x2="802.5" y2="663"/>
<line x1="806.5" y1="634" x2="806.5" y2="663"/>
<line x1="809.5" y1="634" x2="809.5" y2="663"/>
<line x1="813.5" y1="634" x2="813.5" y2="663"/>
<line x1="816.5" y1="634" x2="816.5" y2="663"/>
<line x1="820.5" y1="634" x2="820.5" y2="663"/>
<line x1="823.5" y1="634" x2="823.5" y2="663"/>
<line x1="827.5" y1="634" x2="827.5" y2="663"/>
<line x1="830.5" y1="634" x2="830.5" y2="663"/>
<line x1="834.5" y1="634" x2="834.5" y2="663"/>
<line x1="837.5" y1="634" x2="837.5" y2="663"/>
<line x1="841.5" y1="634" x2="841.5" y2="663"/>
<line x1="844.5" y1="634" x2="844.5" y2="663"/>
<line x1="847.5" y1="634" x2="847.5" y2="663"/>
<line x1="851.5" y1="634" x2="851.5" y2="663"/>
<line x1="854.5" y1="634" x2="854.5" y2="663"/>
<line x1="858.5" y1="634" x2="858.5" y2="663"/>
<line x1="861.5" y1="634" x2="861.5" y2="663"/>
<line x1="865.5" y1="634" x2="865.5" y2="663"/>
<line x1="868.5" y1="634" x2="868.5" y2="663"/>
<line x1="872.5" y1="634" x2="872.5" y2="663"/>
<line x1="875.5" y1="634" x2="875.5" y2="663"/>
<line x1="879.5" y1="634" x2="879.5" y2="663"/>
<line x1="882.5" y1="634" x2="882.5" y2="663"/>
<line x1="886.5" y1="634" x2="886.5" y2="663"/>
<line x1="889.5" y1="634" x2="889.5" y2="663"/>
<line x1="893.5" y1="634" x2="893.5" y2="663"/>
<line x1="896.5" y1="634" x2="896.5" y2="663"/>
<line x1="900.5" y1="634" x2="900.5" y2="663"/>
<line x1="903.5" y1="634" x2="903.5" y2="663"/>
<line x1="907.5" y1="634" x2="907.5" y2="663"/>
<line x1="910.5" y1="634" x2="910.5" y2="663"/>
<line x1="913.5" y1="634" x2="913.5" y2="663"/>
<line x1="917.5" y1="634" x2="917.5" y2="663"/>
<line x1="920.5" y1="634" x2="920.5" y2="663"/>
<line x1="924.5" y1="634" x2="924.5" y2="663"/>
<line x1="927.5" y1="634" x2="927.5" y2="663"/>
<line x1="931.5" y1="634" x2="931.5" y2="663"/>
<line x1="934.5" y1="634" x2="934.5" y2="663"/>
<line x1="938.5" y1="634" x2="938.5" y2="663"/>
<line x1="941.5" y1="634" x2="941.5" y2="663"/>
<line x1="945.5" y1="634" x2="945.5" y2="663"/>
<line x1="948.5" y1="634" x2="948.5" y2="663"/>
<line x1="952.5" y1="634" x2="952.5" y2="663"/>
<line x1="955.5" y1="634" x2="955.5" y2="663"/>
<line x1="959.5" y1="634" x2="959.5" y2="663"/>
<line x1="962.5" y1="634" x2="962.5" y2="663"/>
<line x1="966.5" y1="634" x2="966.5" y2="663"/>
<line x1="969.5" y1="634" x2="969.5" y2="663"/>
<line x1="973.5" y1="634" x2="973.5" y2="663"/>
<line x1="976.5" y1="634" x2="976.5" y2="663"/>
<line x1="980.5" y1="634" x2="980.5" y2="663"/>
<line x1="983.5" y1="634" x2="983.5" y2="663"/>
<line x1="986.5" y1="634" x2="986.5" y2="663"/>
<line x1="990.5" y1="634" x2="990.5" y2="663"/>
<line x1="993.5" y1="634" x2="993.5" y2="663"/>
</g>
<g shape-rendering="auto">
<polyline fill="none" stroke="#2a9a2a" stroke-width="1" points="226.0,621.0 229.5,620.6 233.0,618.7 236.4,619.9 239.9,619.6 243.4,619.2 246.9,618.9 250.3,616.9 253.8,618.1 257.3,617.8 260.8,617.4 264.2,617.0 267.7,614.9 271.2,616.1 274.7,615.7 278.1,615.2 281.6,614.8 285.1,612.8 288.6,613.9 292.0,613.5 295.5,613.1 299.0,612.6 302.5,610.6 305.9,611.7 309.4,611.3 312.9,610.9 316.4,610.4 319.8,608.4 323.3,609.5 326.8,609.1 330.3,608.6 333.7,608.2 337.2,606.2 340.7,607.3 344.2,606.9 347.6,606.4 351.1,606.0 354.6,603.7 358.1,604.7 361.5,604.0 365.0,603.3 368.5,602.7 372.0,600.4 375.4,601.3 378.9,600.7 382.4,600.0 385.9,599.3 389.3,596.8 392.8,597.5 396.3,596.7 399.8,595.8 403.2,594.9 406.7,592.5 410.2,593.2 413.7,592.3 417.1,591.5 420.6,590.6 424.1,588.1 427.6,588.8 431.0,587.9 434.5,587.0 438.0,586.1 441.5,583.6 444.9,584.3 448.4,583.4 451.9,582.4 455.4,581.4 458.8,578.8 462.3,579.4 465.8,578.4 469.3,577.4 472.7,576.4 476.2,573.7 479.7,574.3 483.2,573.3 486.6,572.0 490.1,570.8 493.6,568.0 497.1,568.3 500.5,567.1 504.0,565.9 507.5,564.7 511.0,561.8 514.4,562.2 517.9,560.8 521.4,559.4 524.9,558.1 528.3,555.1 531.8,555.3 535.3,553.9 538.8,552.5 542.2,550.9 545.7,547.5 549.2,548.5 552.7,549.8 556.1,559.1 559.6,568.4 563.1,575.9 566.6,576.2 570.0,574.9 573.5,573.6 577.0,572.4 580.5,569.4 583.9,569.6 587.4,568.2 590.9,567.5 594.4,568.0 597.8,575.6 601.3,586.5 604.8,594.9 608.3,593.9 611.7,592.9 615.2,590.2 618.7,590.8 622.2,589.8 625.6,588.7 629.1,587.7 632.6,585.1 636.1,585.7 639.5,584.6 643.0,583.5 646.5,582.3 650.0,579.5 653.4,579.9 656.9,578.7 660.4,577.5 663.9,576.3 667.3,573.6 670.8,574.0 674.3,572.8 677.8,571.6 681.2,570.4 684.7,567.6 688.2,568.0 691.7,566.8 695.1,565.7 698.6,564.5 702.1,561.7 705.6,562.1 709.0,560.9 712.5,559.7 716.0,558.4 719.5,555.6 722.9,556.0 726.4,554.8 729.9,553.6 733.4,552.4 736.8,549.6 740.3,550.0 743.8,548.8 747.3,547.6 750.7,546.4 754.2,543.6 757.7,544.0 761.2,544.9 764.6,555.0 768.1,565.1 771.6,570.0 775.1,570.5 778.5,569.4 782.0,568.2 785.5,567.1 789.0,564.4 792.4,564.8 795.9,563.7 799.4,562.5 802.9,561.4 806.3,558.7 809.8,559.1 813.3,558.0 816.8,556.8 820.2,555.7 823.7,553.0 827.2,553.4 830.7,552.1 834.1,550.8 837.6,549.5 841.1,546.6 844.6,546.9 848.0,545.6 851.5,544.3 855.0,543.0 858.5,540.1 861.9,540.4 865.4,539.1 868.9,537.8 872.4,536.5 875.8,533.6 879.3,533.9 882.8,532.6 886.3,531.3 889.7,530.0 893.2,527.2 896.7,527.6 900.2,526.4 903.6,525.2 907.1,524.0 910.6,521.2 914.1,521.6 917.5,520.4 921.0,519.2 924.5,518.0 928.0,515.2 931.4,515.6 934.9,514.5 938.4,513.3 941.9,512.1 945.3,509.3 948.8,510.0 952.3,509.2 955.8,508.3 959.2,507.4 962.7,505.0 966.2,505.7 969.7,504.8 973.1,504.0 976.6,503.2 980.1,501.0 983.6,501.9 987.0,501.3 990.5,500.6 994.0,500.0"/>
<polyline fill="none" stroke="#2a9a2a" stroke-width="1" points="551.5,548 555.5,577.5 563,577.5"/>
<polyline fill="none" stroke="#2a9a2a" stroke-width="1" points="593,567 597,595 605,595"/>
<polyline fill="none" stroke="#2a9a2a" stroke-width="1" points="760.5,543 764,572 770.5,572"/>
<polyline fill="none" stroke="#000080" stroke-width="2.2" stroke-linejoin="round" shape-rendering="crispEdges" points="226.0,621.0 229.5,620.6 233.0,620.3 236.4,619.9 239.9,619.6 243.4,619.2 246.9,618.9 250.3,618.5 253.8,618.1 257.3,617.8 260.8,617.4 264.2,617.0 267.7,616.5 271.2,616.1 274.7,615.7 278.1,615.2 281.6,614.8 285.1,614.4 288.6,613.9 292.0,613.5 295.5,613.1 299.0,612.6 302.5,612.2 305.9,611.7 309.4,611.3 312.9,610.9 316.4,610.4 319.8,610.0 323.3,609.5 326.8,609.1 330.3,608.6 333.7,608.2 337.2,607.8 340.7,607.3 344.2,606.9 347.6,606.4 351.1,606.0 354.6,605.3 358.1,604.7 361.5,604.0 365.0,603.3 368.5,602.7 372.0,602.0 375.4,601.3 378.9,600.7 382.4,600.0 385.9,599.3 389.3,598.4 392.8,597.5 396.3,596.7 399.8,595.8 403.2,594.9 406.7,594.1 410.2,593.2 413.7,592.3 417.1,591.5 420.6,590.6 424.1,589.7 427.6,588.8 431.0,587.9 434.5,587.0 438.0,586.1 441.5,585.2 444.9,584.3 448.4,583.4 451.9,582.4 455.4,581.4 458.8,580.4 462.3,579.4 465.8,578.4 469.3,577.4 472.7,576.4 476.2,575.3 479.7,574.3 483.2,573.3 486.6,572.0 490.1,570.8 493.6,569.6 497.1,568.3 500.5,567.1 504.0,565.9 507.5,564.7 511.0,563.4 514.4,562.2 517.9,560.8 521.4,559.4 524.9,558.1 528.3,556.7 531.8,555.3 535.3,553.9 538.8,552.5 542.2,550.9 545.7,549.1 549.2,548.5 552.7,549.8 556.1,559.1 559.6,568.4 563.1,577.5 566.6,576.2 570.0,574.9 573.5,573.6 577.0,572.4 580.5,571.0 583.9,569.6 587.4,568.2 590.9,567.5 594.4,568.0 597.8,577.2 601.3,586.5 604.8,594.9 608.3,593.9 611.7,592.9 615.2,591.8 618.7,590.8 622.2,589.8 625.6,588.7 629.1,587.7 632.6,586.7 636.1,585.7 639.5,584.6 643.0,583.5 646.5,582.3 650.0,581.1 653.4,579.9 656.9,578.7 660.4,577.5 663.9,576.3 667.3,575.2 670.8,574.0 674.3,572.8 677.8,571.6 681.2,570.4 684.7,569.2 688.2,568.0 691.7,566.8 695.1,565.7 698.6,564.5 702.1,563.3 705.6,562.1 709.0,560.9 712.5,559.7 716.0,558.4 719.5,557.2 722.9,556.0 726.4,554.8 729.9,553.6 733.4,552.4 736.8,551.2 740.3,550.0 743.8,548.8 747.3,547.6 750.7,546.4 754.2,545.2 757.7,544.0 761.2,544.9 764.6,555.0 768.1,565.1 771.6,571.6 775.1,570.5 778.5,569.4 782.0,568.2 785.5,567.1 789.0,566.0 792.4,564.8 795.9,563.7 799.4,562.5 802.9,561.4 806.3,560.3 809.8,559.1 813.3,558.0 816.8,556.8 820.2,555.7 823.7,554.6 827.2,553.4 830.7,552.1 834.1,550.8 837.6,549.5 841.1,548.2 844.6,546.9 848.0,545.6 851.5,544.3 855.0,543.0 858.5,541.7 861.9,540.4 865.4,539.1 868.9,537.8 872.4,536.5 875.8,535.2 879.3,533.9 882.8,532.6 886.3,531.3 889.7,530.0 893.2,528.8 896.7,527.6 900.2,526.4 903.6,525.2 907.1,524.0 910.6,522.8 914.1,521.6 917.5,520.4 921.0,519.2 924.5,518.0 928.0,516.8 931.4,515.6 934.9,514.5 938.4,513.3 941.9,512.1 945.3,510.9 948.8,510.0 952.3,509.2 955.8,508.3 959.2,507.4 962.7,506.6 966.2,505.7 969.7,504.8 973.1,504.0 976.6,503.2 980.1,502.6 983.6,501.9 987.0,501.3 990.5,500.6 994.0,500.0"/>
</g>
<g fill="none" stroke="#000" stroke-width="1">
<rect x="225.5" y="485.5" width="771" height="143"/>
<rect x="225.5" y="630.5" width="771" height="34"/>
</g>
<g stroke="#000" stroke-width="1">
<line x1="996" y1="499.5" x2="999" y2="499.5"/>
<line x1="996" y1="531.5" x2="999" y2="531.5"/>
<line x1="996" y1="563.5" x2="999" y2="563.5"/>
<line x1="996" y1="595.5" x2="999" y2="595.5"/>
<line x1="996" y1="627.5" x2="999" y2="627.5"/>
<line x1="257.5" y1="664" x2="257.5" y2="667"/>
<line x1="289.5" y1="664" x2="289.5" y2="667"/>
<line x1="321.5" y1="664" x2="321.5" y2="667"/>
<line x1="353.5" y1="664" x2="353.5" y2="667"/>
<line x1="385.5" y1="664" x2="385.5" y2="667"/>
<line x1="417.5" y1="664" x2="417.5" y2="667"/>
<line x1="449.5" y1="664" x2="449.5" y2="667"/>
<line x1="481.5" y1="664" x2="481.5" y2="667"/>
<line x1="513.5" y1="664" x2="513.5" y2="667"/>
<line x1="545.5" y1="664" x2="545.5" y2="667"/>
<line x1="577.5" y1="664" x2="577.5" y2="667"/>
<line x1="609.5" y1="664" x2="609.5" y2="667"/>
<line x1="641.5" y1="664" x2="641.5" y2="667"/>
<line x1="673.5" y1="664" x2="673.5" y2="667"/>
<line x1="705.5" y1="664" x2="705.5" y2="667"/>
<line x1="737.5" y1="664" x2="737.5" y2="667"/>
<line x1="769.5" y1="664" x2="769.5" y2="667"/>
<line x1="801.5" y1="664" x2="801.5" y2="667"/>
<line x1="833.5" y1="664" x2="833.5" y2="667"/>
<line x1="865.5" y1="664" x2="865.5" y2="667"/>
<line x1="897.5" y1="664" x2="897.5" y2="667"/>
<line x1="929.5" y1="664" x2="929.5" y2="667"/>
<line x1="961.5" y1="664" x2="961.5" y2="667"/>
<line x1="993.5" y1="664" x2="993.5" y2="667"/>
</g>
<g font-family="'DejaVu Sans Condensed','Liberation Sans',sans-serif" font-size="9.8" fill="#000" shape-rendering="auto">
<text x="1002.0" y="501.3" textLength="27.9" lengthAdjust="spacingAndGlyphs">109718</text>
<text x="1002.0" y="533.3" textLength="23.1" lengthAdjust="spacingAndGlyphs">83534</text>
<text x="1002.0" y="565.3" textLength="23.1" lengthAdjust="spacingAndGlyphs">57351</text>
<text x="1002.0" y="597.3" textLength="23.1" lengthAdjust="spacingAndGlyphs">31167</text>
<text x="1002.0" y="629.3" textLength="18.4" lengthAdjust="spacingAndGlyphs">4984</text>
<text x="226.5" y="676" textLength="4.2" lengthAdjust="spacingAndGlyphs">0</text>
<text x="247.4" y="676" textLength="8.9" lengthAdjust="spacingAndGlyphs">10</text>
<text x="279.4" y="676" textLength="8.9" lengthAdjust="spacingAndGlyphs">19</text>
<text x="311.4" y="676" textLength="8.9" lengthAdjust="spacingAndGlyphs">29</text>
<text x="343.4" y="676" textLength="8.9" lengthAdjust="spacingAndGlyphs">38</text>
<text x="375.4" y="676" textLength="8.9" lengthAdjust="spacingAndGlyphs">47</text>
<text x="407.4" y="676" textLength="8.9" lengthAdjust="spacingAndGlyphs">56</text>
<text x="439.4" y="676" textLength="8.9" lengthAdjust="spacingAndGlyphs">65</text>
<text x="471.4" y="676" textLength="8.9" lengthAdjust="spacingAndGlyphs">75</text>
<text x="503.4" y="676" textLength="8.9" lengthAdjust="spacingAndGlyphs">84</text>
<text x="535.4" y="676" textLength="8.9" lengthAdjust="spacingAndGlyphs">93</text>
<text x="562.6" y="676" textLength="13.7" lengthAdjust="spacingAndGlyphs">102</text>
<text x="594.6" y="676" textLength="13.7" lengthAdjust="spacingAndGlyphs">111</text>
<text x="626.6" y="676" textLength="13.7" lengthAdjust="spacingAndGlyphs">120</text>
<text x="658.6" y="676" textLength="13.7" lengthAdjust="spacingAndGlyphs">130</text>
<text x="690.6" y="676" textLength="13.7" lengthAdjust="spacingAndGlyphs">139</text>
<text x="722.6" y="676" textLength="13.7" lengthAdjust="spacingAndGlyphs">148</text>
<text x="754.6" y="676" textLength="13.7" lengthAdjust="spacingAndGlyphs">157</text>
<text x="786.6" y="676" textLength="13.7" lengthAdjust="spacingAndGlyphs">166</text>
<text x="818.6" y="676" textLength="13.7" lengthAdjust="spacingAndGlyphs">175</text>
<text x="850.6" y="676" textLength="13.7" lengthAdjust="spacingAndGlyphs">185</text>
<text x="882.6" y="676" textLength="13.7" lengthAdjust="spacingAndGlyphs">194</text>
<text x="914.6" y="676" textLength="13.7" lengthAdjust="spacingAndGlyphs">203</text>
<text x="946.6" y="676" textLength="13.7" lengthAdjust="spacingAndGlyphs">212</text>
<text x="978.6" y="676" textLength="13.7" lengthAdjust="spacingAndGlyphs">221</text>
</g>
<g font-size="9.6" font-family="'DejaVu Sans Condensed','Liberation Sans',sans-serif" shape-rendering="auto">
<text x="228.2" y="497.5" fill="#000080" textLength="32" lengthAdjust="spacingAndGlyphs">Balance</text>
<text x="264" y="497.5" fill="#000">/</text>
<text x="268.4" y="497.5" fill="#0c8c0c" font-family="'Liberation Sans','Noto Sans CJK JP',sans-serif" font-size="10" font-weight="500" textLength="87" lengthAdjust="spacingAndGlyphs">ヒストリー・ファイルの選択</text>
<text x="359.2" y="497.5" fill="#000" textLength="451.5" lengthAdjust="spacingAndGlyphs">/ Every tick (the most precise method based on all available least timeframes to generate each tick) / 90.00%</text>
</g>
<text x="229" y="643" font-size="9.4" font-weight="bold" font-family="'Liberation Sans','IPAGothic','Noto Sans CJK JP',sans-serif" shape-rendering="auto">数量</text>
</svg>

<div id="trades">
<div class="tr hd" style="top:0"><div class="k1">#</div><div class="k2"><span class="jp">時間</span></div><div class="k3"><span class="jp">取引種別</span></div><div class="k4"><span class="jp">注文番号</span></div><div class="k5"><span class="jp">数量</span></div><div class="k6">Price</div><div class="k7">S/L:<span class="jp">決済逆指値</span></div><div class="k8">T/P:<span class="jp">決済指値</span></div><div class="k9"><span class="jp">損益</span></div><div class="k10">Balance</div></div>
<div class="tr" style="top:21px"><div class="k1">1</div><div class="k2">2008.01.03 20:19</div><div class="k3">buy</div><div class="k4">1</div><div class="k5">1.50</div><div class="k6">1.4745</div><div class="k7">1.4585</div><div class="k8">1.4765</div><div class="k9"></div><div class="k10"></div></div>
<div class="tr alt" style="top:42px"><div class="k1">2</div><div class="k2">2008.01.03 20:20</div><div class="k3">buy</div><div class="k4">2</div><div class="k5">1.20</div><div class="k6">1.4744</div><div class="k7">1.4584</div><div class="k8">1.4764</div><div class="k9" style="width:156px"></div></div>
<div class="tr" style="top:63px"><div class="k1">3</div><div class="k2">2008.01.03 20:20</div><div class="k3">buy</div><div class="k4">3</div><div class="k5">0.90</div><div class="k6">1.4745</div><div class="k7">1.4585</div><div class="k8">1.4765</div><div class="k9"></div><div class="k10"></div></div>
<div class="tr alt" style="top:84px"><div class="k1">4</div><div class="k2">2008.01.04 14:30</div><div class="k3">t/p</div><div class="k4">1</div><div class="k5">1.50</div><div class="k6">1.4765</div><div class="k7">1.4585</div><div class="k8">1.4765</div><div class="k9">306.30</div><div class="k10">10306.30</div></div>
</div>

<div id="vscroll">
<svg width="14" height="737" viewBox="0 0 14 737" style="position:absolute;left:0;top:0">
<rect x="1" y="0" width="14" height="15" rx="1.5" fill="#c3d3fb" stroke="#fff" stroke-width="1"/>
<path d="M3.6 9.6 L7.6 5.6 L11.6 9.6" fill="none" stroke="#44598a" stroke-width="2.2"/>
<rect x="1" y="15.6" width="14" height="51" rx="1.5" fill="#c3d1f9" stroke="#fff" stroke-width="1"/>
<rect x="1.5" y="16.1" width="13" height="50" rx="1.5" fill="none" stroke="#b0c0ee" stroke-width="0.8"/>
<path d="M4.5 38.5 H11.5 M4.5 40.5 H11.5 M4.5 42.5 H11.5" stroke="#eef3ff" stroke-width="1"/>
<path d="M5 39.5 H12 M5 41.5 H12 M5 43.5 H12" stroke="#a6b6e6" stroke-width="0.8"/>
<rect x="1" y="723" width="14" height="14" rx="1.5" fill="#c3d3fb" stroke="#fff" stroke-width="1"/>
<path d="M3.6 728.4 L7.6 732.4 L11.6 728.4" fill="none" stroke="#44598a" stroke-width="2.2"/>
</svg>

</div>
<div id="status">
<div style="position:absolute;left:0;top:-1px;width:1280px;height:5px;background:linear-gradient(to bottom,#8d8b7e 0,#b9b6a6 1px,#d6d3c3 2px,#e4e1d0 3px,#ece9d8 5px)"></div>
<svg width="18" height="18" viewBox="0 0 18 18" style="position:absolute;left:1px;top:4px">
<path d="M4.5 1.5 H12.5 L16 5 V16.5 H4.5 Z" fill="#e8efff" stroke="#93a6d4" stroke-width="1"/>
<path d="M12.5 1.5 V5 H16 Z" fill="#c5d3f3" stroke="#93a6d4" stroke-width="0.8"/>
<circle cx="7.4" cy="10.6" r="4.6" fill="none" stroke="#2b74d8" stroke-width="2.4"/>
<rect x="7.4" y="11" width="6" height="3" fill="#e8efff"/>
<path d="M3.4 10.4 H11.6" stroke="#2b74d8" stroke-width="1.8"/>
<path d="M1.6 13.2 Q6 5.4 12.6 5.4" stroke="#6aa9ee" stroke-width="1" fill="none"/>
</svg>
<div class="st" style="left:21.5px;"><span class="sx" style="transform:scaleX(0.80);width:40.3px">ページが</span><span class="sx" style="width:25.2px;transform:scaleX(0.99)">表示</span><span class="sx" style="transform:scaleX(0.705)">されました</span></div>
<div class="sp" style="left:1007px"></div><div class="sp" style="left:1031px"></div><div class="sp" style="left:1055px"></div><div class="sp" style="left:1079px"></div><div class="sp" style="left:1103px"></div><div class="sp" style="left:1127px"></div><div class="sp" style="left:1278px"></div>
<svg width="14" height="18" viewBox="0 0 14 18" style="position:absolute;left:1135px;top:4px">
<path d="M2.5 2 L11 1 L12.4 11.4 L3.4 12.6 Z" fill="#4f9cf0" stroke="#2b6fcc" stroke-width="0.8"/>
<path d="M4 3.4 L10 2.6 L10.8 7 L4.6 8 Z" fill="#9fd0ff"/>
<path d="M3 13.4 L12.2 12.2 L12.6 16 L4 17 Z" fill="#d9dde6" stroke="#9aa2b4" stroke-width="0.7"/>
<circle cx="10.8" cy="14.4" r="0.8" fill="#d84a3a"/>
</svg>
<div class="st" style="left:1152.6px;"><span class="sx" style="transform:scaleX(0.665);width:22px">マイ</span><span class="sx" style="transform:scaleX(0.685)">コンピュータ</span></div>
<svg width="9" height="8" viewBox="0 0 9 8" style="position:absolute;left:1271px;top:16px">
<path d="M1.5 1.2 V8.5 H9.5 Z" fill="#fff" stroke="#000" stroke-width="1.3"/>
</svg>

</div>
</body>
</html>
